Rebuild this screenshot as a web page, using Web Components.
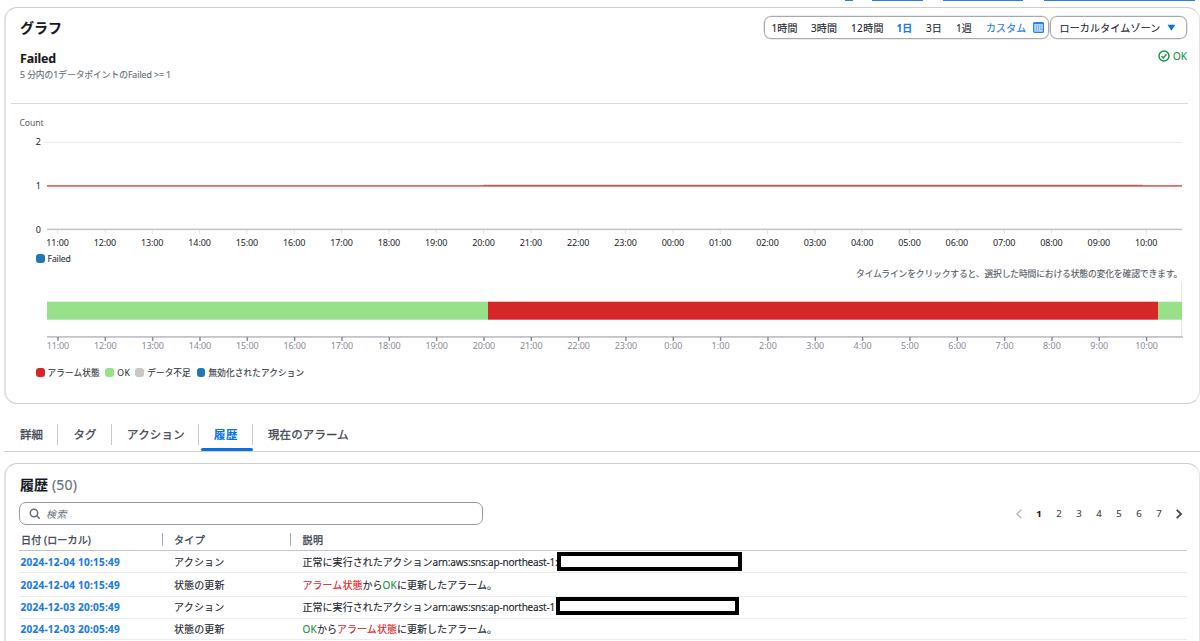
<!DOCTYPE html>
<html lang="ja">
<head>
<meta charset="utf-8">
<title>CloudWatch アラーム</title>
<style>
html,body{margin:0;background:#fff}
body{width:1200px;height:641px;overflow:hidden;font-family:"Noto Sans","Noto Sans CJK JP",sans-serif;color:#16191f;font-size:10px;-webkit-text-stroke:.12px}
</style>
</head>
<body>
<alarm-page></alarm-page>
<script>
const def = (name, html, setup) => {
  const tpl = document.createElement('template');
  tpl.innerHTML = html;
  customElements.define(name, class extends HTMLElement {
    connectedCallback() {
      if (this.shadowRoot) return;
      this.attachShadow({mode: 'open'}).append(tpl.content.cloneNode(true));
      if (setup) setup(this, this.shadowRoot);
    }
  });
};

/* Label whose tracking adapts so that it fills the width w; g is the gap before it. */
def('fit-text', `<style>:host{display:block;flex:none;white-space:pre;line-height:16px}span{display:inline-block}</style><span><slot></slot></span>`, (el, root) => {
  const w = +el.getAttribute('w'), s = root.querySelector('span');
  if (el.hasAttribute('g')) el.style.marginLeft = el.getAttribute('g') + 'px';
  if (!w) return;
  el.style.width = w + 'px';
  const nat = s.getBoundingClientRect().width;
  s.style.letterSpacing = ((w - nat) / [...el.textContent].length).toFixed(3) + 'px';
});

def('panel-card', `<style>
:host{display:block;box-sizing:border-box;margin-left:4px;width:1196px;border:1px solid #cdcdd3;border-left:2px solid #e0e0e6;border-right-color:#e0e0e6;border-radius:13px;background:#fff}
</style><slot></slot>`);

def('top-buttons', `<style>
:host{display:flex;height:1px;padding-left:845px}
i{background:#2a80e6;height:1px}
</style><i style="width:8px"></i><i style="width:51px;margin-left:19px"></i><i style="width:80px;margin-left:20px"></i><i style="width:151px;margin-left:21px"></i>`);

def('range-picker', `<style>
:host{display:flex;gap:1px}
div{box-sizing:border-box;height:23px;border:1px solid #a9a9b1;border-radius:7px;display:flex;align-items:center;font-size:10px;color:#22262e;box-shadow:0 0 0 .3px #b5b5bc}
.r{width:285px;padding-left:6.5px}.z{width:137px;padding-left:8.5px}
.b{color:#1a7be8}.on{font-weight:700}
svg{display:block;flex:none}
</style>
<div class="r"><fit-text w="26">1時間</fit-text><fit-text g="13.5" w="26">3時間</fit-text><fit-text g="14" w="33">12時間</fit-text><fit-text class="b on" g="12.5" w="16">1日</fit-text><fit-text g="13.5" w="16">3日</fit-text><fit-text g="14" w="16">1週</fit-text><fit-text class="b" g="14" w="40.5">カスタム</fit-text>
<svg style="margin-left:6px" width="11" height="11" viewBox="0 0 11 11"><rect x=".6" y=".6" width="9.8" height="9.8" rx="1" fill="#bcd8fa" stroke="#2a80e6" stroke-width="1.2"/><path d="M1 1.5h9" stroke="#2a80e6" stroke-width="1"/><path d="M3.4 2.5v6.5M5.5 2.5v6.5M7.6 2.5v5M7 7.5h3" stroke="#6fa9f0" stroke-width=".8"/></svg></div>
<div class="z"><fit-text w="101">ローカルタイムゾーン</fit-text><svg style="margin-left:6px" width="9" height="8" viewBox="0 0 9 8"><path d="M.5.8h7.8L4.4 6.8z" fill="#0972e3"/></svg></div>`);

def('metric-chart', `<style>
:host{display:block;height:147px}svg{display:block}
text{font-size:9px;fill:#22252b}
</style><svg width="1192" height="146" viewBox="6 104 1192 146"></svg>`, (el, root) => {
  let s = '<text x="19.5" y="126" textLength="24" style="font-size:8.6px;fill:#545b64">Count</text>';
  s += '<path d="M44 142.5H1182" stroke="#ececef"/><path d="M44 186H48" stroke="#ececef"/>';
  [[2,145.2],[1,188.8],[0,232.6]].forEach(([t,y]) => s += `<text x="41" y="${y}" text-anchor="end">${t}</text>`);
  s += '<rect x="47" y="185" width="1135" height="1.8" fill="#e06a6c"/><rect x="483.5" y="184.8" width="659" height="1" fill="#a8555f"/>';
  s += '<rect x="47" y="228.6" width="1135" height="1.6" fill="#c6c6ca"/>';
  for (let i = 0; i < 24; i++) {
    const x = (57.6 + i * 47.33).toFixed(2), h = String((11 + i) % 24).padStart(2, '0');
    s += `<path d="M${x} 230.3v3.5" stroke="#d9d9de" stroke-width=".8"/><text x="${x}" y="245.8" text-anchor="middle" textLength="22.5">${h}:00</text>`;
  }
  root.querySelector('svg').innerHTML = s;
});

def('state-timeline', `<style>
:host{display:block;height:70px}svg{display:block}
text{font-size:9px;fill:#8b8b95}
</style><svg width="1192" height="70" viewBox="6 283 1192 70"></svg>`, (el, root) => {
  let s = '<path d="M1181.7 283V337" stroke="#e3e3e8"/>';
  s += '<rect x="47" y="301.7" width="441" height="18" fill="#98e08a"/><rect x="488" y="301.7" width="670" height="18" fill="#d62728"/><rect x="1158" y="301.7" width="24" height="18" fill="#98e08a"/>';
  s += '<rect x="47" y="336" width="1136" height="1.8" fill="#c3c3c9"/>';
  for (let i = 0; i < 24; i++) {
    const x = (58 + i * 47.33).toFixed(2), n = (11 + i) % 24;
    s += `<path d="M${x} 337v4" stroke="#8b8b95" stroke-width="1.5"/><text x="${x}" y="349.3" text-anchor="middle" textLength="${n > 9 ? 22.5 : 18}">${n}:00</text>`;
  }
  root.querySelector('svg').innerHTML = s;
});

def('legend-row', `<style>:host{display:flex;align-items:center;height:16px;padding-left:30px;font-size:8.6px;color:#33373e}</style><slot></slot>`);
def('legend-dot', `<style>:host{display:block;flex:none;width:8.6px;height:9px;margin-top:-1px;border-radius:3px}</style>`, el => {
  el.style.background = el.getAttribute('c');
  el.style.marginLeft = (el.getAttribute('g') || 0) + 'px';
});

def('graph-panel', `<style>
:host{display:block;margin-top:6px}
panel-card{height:397px}
.head{display:flex;justify-content:space-between;padding:8px 12px 0 14px;height:23px;align-items:center}
.h1{font-size:14px;font-weight:700}
.sub{display:flex;justify-content:space-between;padding:8px 12px 0 14px}
.name{font-size:12.4px;font-weight:700}
.cond{font-size:8.8px;color:#687078}
.ok{display:flex;align-items:center;height:17px;color:#1d9346;font-size:10px}
.rule{height:1px;background:#dadadd;margin:20px 11px 0 5px}
.hint{display:flex;justify-content:flex-end;height:16px;align-items:center;padding-right:17px;font-size:8.8px;color:#545b64}
.hint fit-text{margin-top:-3px}
</style>
<panel-card>
<div class="head"><fit-text class="h1" w="42">グラフ</fit-text><range-picker></range-picker></div>
<div class="sub"><div style="padding-top:4px"><fit-text class="name" w="36">Failed</fit-text><fit-text class="cond" w="151">5 分内の1データポイントのFailed &gt;= 1</fit-text></div>
<div class="ok"><svg width="12" height="12" viewBox="0 0 12 12" fill="none" stroke="#1d9346" stroke-width="1.5"><circle cx="6" cy="6" r="5"/><path d="M3.5 6.2 5.3 7.9 8.5 4.3"/></svg><fit-text g="3" w="14">OK</fit-text></div></div>
<div class="rule"></div>
<metric-chart></metric-chart>
<legend-row><legend-dot c="#1f77b4"></legend-dot><fit-text g="3" w="23">Failed</fit-text></legend-row>
<div class="hint"><fit-text w="326">タイムラインをクリックすると、選択した時間における状態の変化を確認できます。</fit-text></div>
<state-timeline></state-timeline>
<legend-row style="margin-top:12px"><legend-dot c="#d62728"></legend-dot><fit-text g="3" w="52">アラーム状態</fit-text><legend-dot c="#98e08a" g="5.5"></legend-dot><fit-text g="3.5" w="13">OK</fit-text><legend-dot c="#c7c7c7" g="5"></legend-dot><fit-text g="3.5" w="43.5">データ不足</fit-text><legend-dot c="#1f77b4" g="6"></legend-dot><fit-text g="3" w="96">無効化されたアクション</fit-text></legend-row>
</panel-card>`);

def('tab-bar', `<style>
:host{display:flex;align-items:center;box-sizing:border-box;height:48px;margin-left:4px;padding:13px 0 0 16px;border-bottom:1px solid #cfcfd4;font-size:11.4px;-webkit-text-stroke:.3px;color:#424650}
fit-text{padding-top:1px}
i{width:1px;height:21px;background:#c9c9cf;flex:none}
.on{position:relative;align-self:stretch;width:52px;display:flex;align-items:center;margin-left:1.5px;color:#0972e3;-webkit-text-stroke:.1px;font-weight:700}
.on::after{content:"";position:absolute;left:0;right:0;bottom:0;height:3px;border-radius:2px;background:#0972e3}
</style>
<fit-text w="23">詳細</fit-text><i style="margin-left:14px"></i><fit-text g="15.5" w="23">タグ</fit-text><i style="margin-left:14.5px"></i><fit-text g="15" w="58">アクション</fit-text><i style="margin-left:13px"></i><div class="on"><fit-text g="13.5" w="24">履歴</fit-text></div><i style="margin-left:-1px"></i><fit-text g="15.5" w="81">現在のアラーム</fit-text>`);

def('page-numbers', `<style>
:host{display:flex;align-items:center;height:16px;color:#424650;font-size:9.6px}
span{width:20px;text-align:center;line-height:16px}
.cur{font-weight:700;color:#16191f}
</style>
<svg width="8" height="10" viewBox="0 0 8 10" fill="none" stroke="#b4b4bb" stroke-width="1.4"><path d="M6.3.8 1.9 5l4.4 4.2"/></svg>
<span class="cur" style="margin-left:6px">1</span><span>2</span><span>3</span><span>4</span><span>5</span><span>6</span><span>7</span>
<svg style="margin-left:6px" width="8" height="10" viewBox="0 0 8 10" fill="none" stroke="#424650" stroke-width="1.8"><path d="M1.7.8 6.1 5 1.7 9.2"/></svg>`);

def('search-box', `<style>
:host{display:flex;align-items:center;box-sizing:border-box;width:464px;height:23px;border:1px solid #9a9aa3;border-radius:7px;padding-left:8.5px;font-size:10px;font-style:italic;color:#6a707b;-webkit-text-stroke:0}
</style><svg width="12" height="12" viewBox="0 0 12 12" fill="none" stroke="#656b78" stroke-width="1.5"><circle cx="5" cy="5" r="3.7"/><path d="m7.7 7.7 3 3"/></svg><fit-text g="5.5" w="21">検索</fit-text>`);

def('log-row', `<style>
:host{display:grid;grid-template-columns:153.5px 128.5px 1fr;align-items:center;box-sizing:border-box;border-bottom:1px solid #ececef;margin:0 12px 0 13px;padding-left:1.5px;font-size:10px;color:#22262e}
.d{color:#1a7be8;font-weight:700}
.e{display:flex;align-items:center}
</style><div class="d"><slot name="date"></slot></div><div><slot name="type"></slot></div><div class="e"><slot></slot></div>`);
def('redacted-box', `<style>:host{display:block;box-sizing:border-box;flex:none;border:4px solid #000;background:#fff;height:19px}</style>`, el => el.style.width = el.getAttribute('w') + 'px');

def('history-panel', `<style>
:host{display:block;margin-top:11px}
panel-card{height:210px}
.t{display:flex;align-items:center;height:18px;padding:12px 0 0 14px;font-size:14px}
.n{color:#687078;font-size:14px}
.s{display:flex;justify-content:space-between;align-items:center;padding:8px 16px 0 13px}
.th{display:flex;align-items:center;box-sizing:border-box;height:26px;padding-top:3px;margin:0 12px 0 13px;padding-left:2px;border-bottom:1px solid #c3c3c9;font-size:10px;-webkit-text-stroke:.3px;color:#424650}
.th fit-text{padding-top:2px}
.th i{width:1px;height:13px;background:#a9a9b1}
.r{color:#e5191f}.g{color:#1d9346}
</style>
<panel-card>
<div class="t"><fit-text w="28" style="font-weight:700">履歴</fit-text><fit-text class="n" g="4" w="25">(50)</fit-text></div>
<div class="s"><search-box></search-box><page-numbers></page-numbers></div>
<div class="th"><fit-text w="70">日付 (ローカル)</fit-text><i style="margin-left:70.5px"></i><fit-text g="11.5" w="31">タイプ</fit-text><i style="margin-left:85px"></i><fit-text g="11.5" w="21">説明</fit-text></div>
<log-row style="height:22px"><fit-text slot="date" w="99.5">2024-12-04 10:15:49</fit-text><fit-text slot="type" w="50.5">アクション</fit-text><fit-text w="130">正常に実行されたアクション</fit-text><fit-text w="125">arn:aws:sns:ap-northeast-1:</fit-text><redacted-box w="185" style="margin-left:-.5px"></redacted-box></log-row>
<log-row style="height:24px"><fit-text slot="date" w="99.5">2024-12-04 10:15:49</fit-text><fit-text slot="type" w="50.5">状態の更新</fit-text><fit-text class="r" w="60">アラーム状態</fit-text><fit-text w="20">から</fit-text><fit-text class="g" w="14.5">OK</fit-text><fit-text w="100">に更新したアラーム。</fit-text></log-row>
<log-row style="height:22px;padding-bottom:1px"><fit-text slot="date" w="99.5">2024-12-03 20:05:49</fit-text><fit-text slot="type" w="50.5">アクション</fit-text><fit-text w="130">正常に実行されたアクション</fit-text><fit-text w="122.5">arn:aws:sns:ap-northeast-1</fit-text><redacted-box w="183" style="margin-left:1px;margin-top:-2px;height:18px"></redacted-box></log-row>
<log-row style="height:21px"><fit-text slot="date" w="99.5">2024-12-03 20:05:49</fit-text><fit-text slot="type" w="50.5">状態の更新</fit-text><fit-text class="g" w="14.5">OK</fit-text><fit-text w="20">から</fit-text><fit-text class="r" w="60">アラーム状態</fit-text><fit-text w="100">に更新したアラーム。</fit-text></log-row>
</panel-card>`);

def('alarm-page', `<style>:host{display:block;height:641px;overflow:hidden}</style>
<top-buttons></top-buttons><graph-panel></graph-panel><tab-bar></tab-bar><history-panel></history-panel>`);
</script>
</body>
</html>
